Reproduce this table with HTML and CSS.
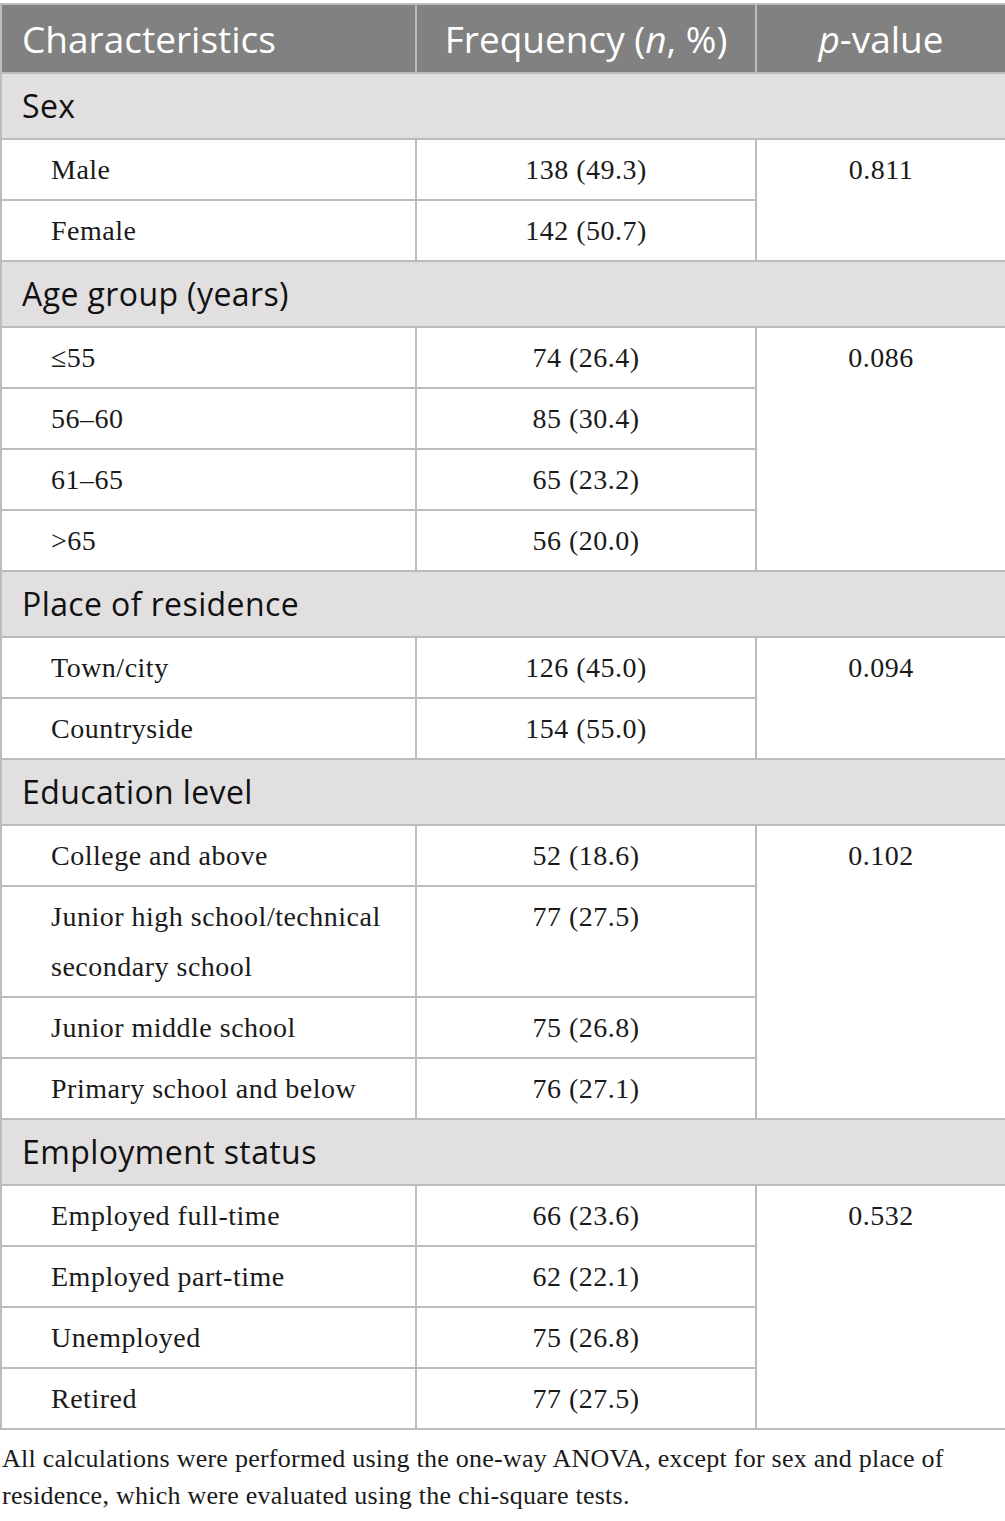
FILE: index.html
```html
<!DOCTYPE html>
<html>
<head>
  <title>Sample characteristics</title>
  <meta name="viewport" content="width=device-width, initial-scale=1">
  <link rel="stylesheet" href="styles.css">
</head>
<body>
  <table class="tbl">
    <colgroup>
      <col class="k1">
      <col class="k2">
      <col class="k3">
    </colgroup>
    <thead>
      <tr>
        <th class="c1">Characteristics</th>
        <th>Frequency (<i>n</i>, %)</th>
        <th><i>p</i>-value</th>
      </tr>
    </thead>
    <tbody>
      <tr class="sec"><td colspan="3">Sex</td></tr>
      <tr><td class="lbl">Male</td><td class="num">138 (49.3)</td><td class="num" rowspan="2">0.811</td></tr>
      <tr><td class="lbl">Female</td><td class="num">142 (50.7)</td></tr>

      <tr class="sec"><td colspan="3">Age group (years)</td></tr>
      <tr><td class="lbl">≤55</td><td class="num">74 (26.4)</td><td class="num" rowspan="4">0.086</td></tr>
      <tr><td class="lbl">56–60</td><td class="num">85 (30.4)</td></tr>
      <tr><td class="lbl">61–65</td><td class="num">65 (23.2)</td></tr>
      <tr><td class="lbl">&gt;65</td><td class="num">56 (20.0)</td></tr>

      <tr class="sec"><td colspan="3">Place of residence</td></tr>
      <tr><td class="lbl">Town/city</td><td class="num">126 (45.0)</td><td class="num" rowspan="2">0.094</td></tr>
      <tr><td class="lbl">Countryside</td><td class="num">154 (55.0)</td></tr>

      <tr class="sec"><td colspan="3">Education level</td></tr>
      <tr><td class="lbl">College and above</td><td class="num">52 (18.6)</td><td class="num" rowspan="4">0.102</td></tr>
      <tr><td class="lbl">Junior high school/technical secondary school</td><td class="num">77 (27.5)</td></tr>
      <tr><td class="lbl">Junior middle school</td><td class="num">75 (26.8)</td></tr>
      <tr><td class="lbl">Primary school and below</td><td class="num">76 (27.1)</td></tr>

      <tr class="sec"><td colspan="3">Employment status</td></tr>
      <tr><td class="lbl">Employed full-time</td><td class="num">66 (23.6)</td><td class="num" rowspan="4">0.532</td></tr>
      <tr><td class="lbl">Employed part-time</td><td class="num">62 (22.1)</td></tr>
      <tr><td class="lbl">Unemployed</td><td class="num">75 (26.8)</td></tr>
      <tr><td class="lbl">Retired</td><td class="num">77 (27.5)</td></tr>
    </tbody>
  </table>

  <p class="note">All calculations were performed using the one-way ANOVA, except for sex and place of residence, which were evaluated using the chi-square tests.</p>
</body>
</html>
```

FILE: styles.css
```css
body { margin: 0; padding: 3px 0 0; background: #fff; color: #1a1a1a; }
.tbl { width: 1005px; border-collapse: collapse; table-layout: fixed; }
.k1 { width: 415px; }
.k2 { width: 340px; }
.k3 { width: 250px; }
.tbl th, .tbl td { border: 2px solid #bcbcbc; }
.tbl th { background: #808180; color: #fff; font-family: "Open Sans", sans-serif; font-weight: 400; font-size: 37px; height: 67px; padding: 0 20px; text-align: center; }
.tbl th.c1 { text-align: left; }
.tbl td { font-family: "Liberation Serif", serif; font-size: 28px; letter-spacing: 0.5px; line-height: 50px; vertical-align: top; padding: 5px 20px 4px; }
.tbl .sec td { background: #e1dfe0; font-family: "Open Sans", sans-serif; font-size: 32px; letter-spacing: 0.4px; line-height: 40px; height: 64px; padding: 0 20px; vertical-align: middle; color: #111; }
.tbl .lbl { padding-left: 49px; }
.num { text-align: center; }
.note { font-family: "Liberation Serif", serif; font-size: 26px; letter-spacing: 0.25px; line-height: 37px; margin: 10px 0 0 2px; color: #1a1a1a; }
```
